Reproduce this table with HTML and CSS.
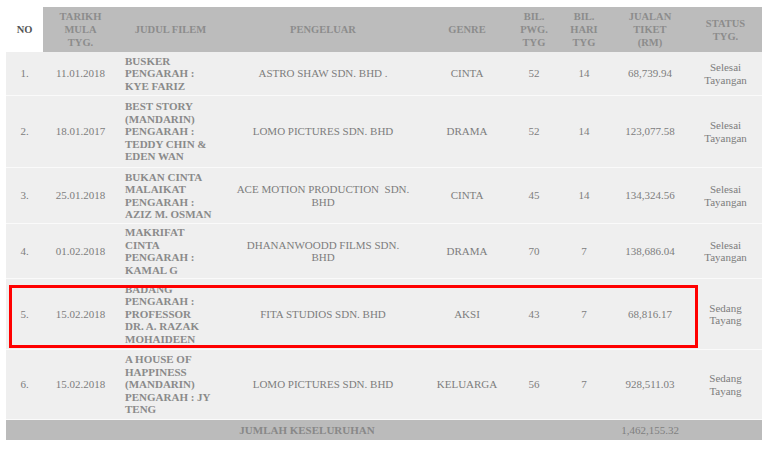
FILE: index.html
```html
<!DOCTYPE html>
<html>
<head>
<meta charset="utf-8">
<link rel="stylesheet" href="styles.css">
</head>
<body>
<div class="wrap">
<table class="films">
  <colgroup>
    <col class="c-no"><col class="c-date"><col class="c-title"><col class="c-prod"><col class="c-genre"><col class="c-pwg"><col class="c-hari"><col class="c-sale"><col class="c-status">
  </colgroup>
  <thead>
    <tr>
      <th class="no-head">NO</th>
      <th>TARIKH<br>MULA<br>TYG.</th>
      <th>JUDUL FILEM</th>
      <th>PENGELUAR</th>
      <th>GENRE</th>
      <th>BIL.<br>PWG.<br>TYG</th>
      <th>BIL.<br>HARI<br>TYG</th>
      <th>JUALAN<br>TIKET<br>(RM)</th>
      <th>STATUS<br>TYG.</th>
    </tr>
  </thead>
  <tbody>
    <tr>
      <td>1.</td><td>11.01.2018</td>
      <td class="title">BUSKER<br>PENGARAH :<br>KYE FARIZ</td>
      <td>ASTRO SHAW SDN. BHD .</td><td>CINTA</td><td>52</td><td>14</td><td>68,739.94</td><td>Selesai<br>Tayangan</td>
    </tr>
    <tr>
      <td>2.</td><td>18.01.2017</td>
      <td class="title">BEST STORY<br>(MANDARIN)<br>PENGARAH :<br>TEDDY CHIN &amp;<br>EDEN WAN</td>
      <td>LOMO PICTURES SDN. BHD</td><td>DRAMA</td><td>52</td><td>14</td><td>123,077.58</td><td>Selesai<br>Tayangan</td>
    </tr>
    <tr>
      <td>3.</td><td>25.01.2018</td>
      <td class="title">BUKAN CINTA<br>MALAIKAT<br>PENGARAH :<br>AZIZ M. OSMAN</td>
      <td>ACE MOTION PRODUCTION&nbsp; SDN.<br>BHD</td><td>CINTA</td><td>45</td><td>14</td><td>134,324.56</td><td>Selesai<br>Tayangan</td>
    </tr>
    <tr>
      <td>4.</td><td>01.02.2018</td>
      <td class="title">MAKRIFAT<br>CINTA<br>PENGARAH :<br>KAMAL G</td>
      <td>DHANANWOODD FILMS SDN.<br>BHD</td><td>DRAMA</td><td>70</td><td>7</td><td>138,686.04</td><td>Selesai<br>Tayangan</td>
    </tr>
    <tr>
      <td>5.</td><td>15.02.2018</td>
      <td class="title">BADANG<br>PENGARAH :<br>PROFESSOR<br>DR. A. RAZAK<br>MOHAIDEEN</td>
      <td>FITA STUDIOS SDN. BHD</td><td>AKSI</td><td>43</td><td>7</td><td>68,816.17</td><td>Sedang<br>Tayang</td>
    </tr>
    <tr>
      <td>6.</td><td>15.02.2018</td>
      <td class="title">A HOUSE OF<br>HAPPINESS<br>(MANDARIN)<br>PENGARAH : JY<br>TENG</td>
      <td>LOMO PICTURES SDN. BHD</td><td>KELUARGA</td><td>56</td><td>7</td><td>928,511.03</td><td>Sedang<br>Tayang</td>
    </tr>
  </tbody>
  <tfoot>
    <tr>
      <td colspan="7" class="sum-label">JUMLAH KESELURUHAN</td>
      <td>1,462,155.32</td>
      <td></td>
    </tr>
  </tfoot>
</table>
<div class="highlight"></div>
</div>
</body>
</html>
```

FILE: styles.css
```css
html, body {
  margin: 0;
  padding: 0;
  background: #fff;
}
body {
  font-family: "Liberation Serif", "Times New Roman", serif;
  font-size: 11px;
  color: #7d7d7d;
}
.wrap {
  position: relative;
  padding: 7px 0 0 6px;
  width: 756px;
}
.films {
  border-collapse: collapse;
  table-layout: fixed;
  width: 756px;
}
.c-no { width: 37px; }
.c-date { width: 75px; }
.c-title { width: 105px; }
.c-prod { width: 200px; }
.c-genre { width: 88px; }
.c-pwg { width: 46px; }
.c-hari { width: 54px; }
.c-sale { width: 78px; }
.c-status { width: 73px; }

th {
  background: #bcbcbc;
  color: #8c8c8c;
  font-weight: bold;
  font-size: 10.5px;
  line-height: 13px;
  height: 45px;
  padding: 0 2px;
  text-align: center;
  vertical-align: middle;
}
th.no-head {
  background: #fff;
  color: #555;
}
td {
  background: #efefef;
  line-height: 12.5px;
  padding: 1px 3px;
  text-align: center;
  vertical-align: middle;
  border-top: 1px solid #d9d9d9;
  border-bottom: 1px solid #fafafa;
}
tbody tr:first-child td { border-top: none; }
td.title {
  text-align: left;
  font-weight: bold;
  color: #8a8a8a;
  padding-left: 7px;
}
tbody tr:nth-child(1) td { height: 41px; }
tbody tr:nth-child(2) td { height: 69px; }
tbody tr:nth-child(3) td { height: 53px; }
tbody tr:nth-child(4) td { height: 52px; }
tbody tr:nth-child(5) td { height: 68px; }
tbody tr:nth-child(6) td { height: 67px; }

tfoot td {
  background: #bbbbbb;
  border: none;
  height: 18px;
  color: #7f7f7f;
}
tfoot td.sum-label {
  font-weight: bold;
  color: #888;
  padding-left: 0;
}
.highlight {
  position: absolute;
  left: 9px;
  top: 285px;
  width: 683px;
  height: 57px;
  border: 3px solid #ff0000;
}
```
